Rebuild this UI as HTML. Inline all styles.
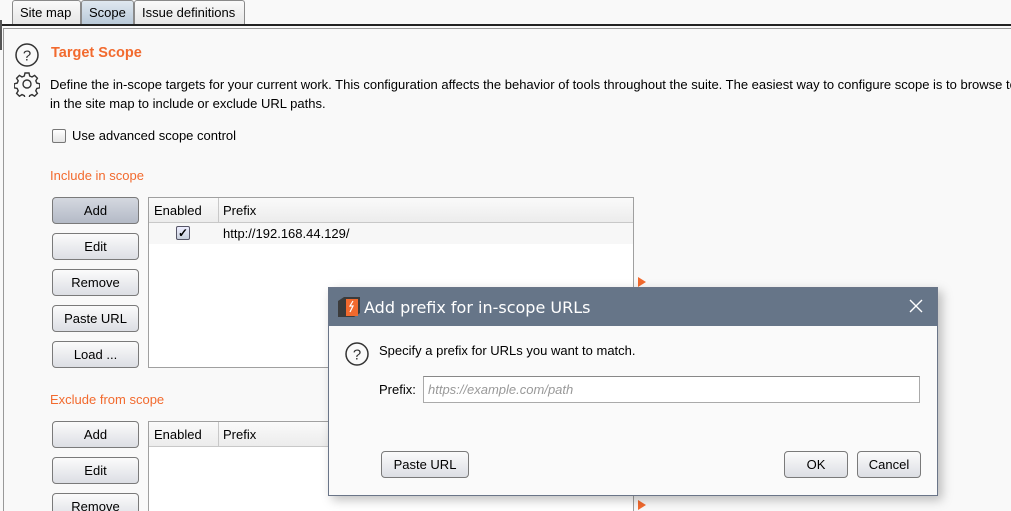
<!DOCTYPE html>
<html style="width:1011px;height:511px;overflow:hidden"><head><style>
*{box-sizing:border-box;margin:0;padding:0}
body{width:1011px;height:511px;overflow:hidden;background:#f9f9f9;font-family:"Liberation Sans",Arial,sans-serif;font-size:13px;color:#000;position:relative}
.abs{position:absolute}
.tab{position:absolute;top:0;height:24px;border:1px solid #8a8a8a;border-bottom:none;border-radius:3px 3px 0 0;background:linear-gradient(#fafafa,#e6e6e6);padding:4px 7px;font-size:13px}
.btn{position:absolute;width:87px;height:27px;border:1px solid #7a7a7a;border-radius:4px;background:linear-gradient(#fbfbfb,#dcdee4);text-align:center;line-height:25px;font-size:13px}
.tbl{position:absolute;left:148px;width:486px;border:1px solid #a0a0a0;background:#fff;overflow:hidden}
.th{height:25px;background:linear-gradient(#fafafa,#ececec);border-bottom:1px solid #c8c8c8;position:relative}
.orange{color:#f26a2e}
</style></head><body>
<div class="tab" style="left:12px;width:69px">Site map</div>
<div class="tab" style="left:81px;width:53px;background:linear-gradient(#dfe8f0,#b9c9d8)">Scope</div>
<div class="tab" style="left:134px;width:111px">Issue definitions</div>
<div class="abs" style="left:0;top:24px;width:1011px;height:2px;background:#222"></div>
<div class="abs" style="left:3px;top:28px;width:1008px;height:1px;background:#999"></div>
<div class="abs" style="left:3px;top:28px;width:1px;height:483px;background:#999"></div>
<div class="abs" style="left:0;top:20px;width:2px;height:30px;background:#555"></div>

<svg class="abs" style="left:14px;top:42px" width="26" height="26"><circle cx="13" cy="13" r="11" fill="none" stroke="#333" stroke-width="1.5"/><text x="13" y="18.5" text-anchor="middle" font-family="Liberation Sans" font-size="15" fill="#333">?</text></svg>
<div class="abs orange" style="left:51px;top:45px;font-size:14.5px;font-weight:bold">Target Scope</div>
<svg class="abs" style="left:14px;top:71px" width="26" height="26" viewBox="0 0 26 26"><g fill="none" stroke="#333" stroke-width="1.4"><circle cx="13" cy="13" r="4"/><path d="M11 2h4l.7 3 2.3 1 2.6-1.6 2.8 2.8-1.6 2.6 1 2.3 3 .7v4l-3 .7-1 2.3 1.6 2.6-2.8 2.8-2.6-1.6-2.3 1-.7 3h-4l-.7-3-2.3-1-2.6 1.6-2.8-2.8 1.6-2.6-1-2.3-3-.7v-4l3-.7 1-2.3-1.6-2.6 2.8-2.8 2.6 1.6 2.3-1z"/></g></svg>
<div class="abs" style="left:50px;top:75px;white-space:nowrap;line-height:19px">Define the in-scope targets for your current work. This configuration affects the behavior of tools throughout the suite. The easiest way to configure scope is to browse to<br>in the site map to include or exclude URL paths.</div>
<div class="abs" style="left:52px;top:129px;width:14px;height:14px;border:1px solid #777;border-radius:2px;background:linear-gradient(#fff,#e4e4e4)"></div>
<div class="abs" style="left:72px;top:128px">Use advanced scope control</div>

<div class="abs orange" style="left:50px;top:168px">Include in scope</div>
<div class="btn" style="left:52px;top:197px;background:linear-gradient(#d4d8e0,#b4bac6)">Add</div>
<div class="btn" style="left:52px;top:233px">Edit</div>
<div class="btn" style="left:52px;top:269px">Remove</div>
<div class="btn" style="left:52px;top:305px">Paste URL</div>
<div class="btn" style="left:52px;top:341px">Load ...</div>
<div class="tbl" style="top:197px;height:171px">
<div class="th"><span class="abs" style="left:5px;top:5px">Enabled</span><span class="abs" style="left:69px;top:0;width:1px;height:24px;background:#c8c8c8"></span><span class="abs" style="left:74px;top:5px">Prefix</span></div>
<div style="height:21px;background:#f7f7f7;position:relative"><span class="abs" style="left:27px;top:3px;width:14px;height:14px;border:1px solid #556;border-radius:2px;background:linear-gradient(#eef,#c8d0dc);font-size:12px;line-height:12px;text-align:center;font-weight:bold">✓</span><span class="abs" style="left:74px;top:3px">http://192.168.44.129/</span></div>
</div>
<div class="abs" style="left:638px;top:277px;width:0;height:0;border-left:8px solid #f26a2e;border-top:5px solid transparent;border-bottom:5px solid transparent"></div>
<div class="abs" style="left:638px;top:500px;width:0;height:0;border-left:8px solid #f26a2e;border-top:5px solid transparent;border-bottom:5px solid transparent"></div>

<div class="abs orange" style="left:50px;top:392px">Exclude from scope</div>
<div class="btn" style="left:52px;top:421px">Add</div>
<div class="btn" style="left:52px;top:457px">Edit</div>
<div class="btn" style="left:52px;top:493px">Remove</div>
<div class="tbl" style="top:421px;height:90px;border-bottom:none">
<div class="th"><span class="abs" style="left:5px;top:5px">Enabled</span><span class="abs" style="left:69px;top:0;width:1px;height:24px;background:#c8c8c8"></span><span class="abs" style="left:74px;top:5px">Prefix</span></div>
</div>

<div class="abs" style="left:328px;top:287px;width:610px;height:209px;background:#fafafa;border:1px solid #6a7588;box-shadow:4px 4px 10px rgba(0,0,0,.25)">
<div style="height:38px;background:#667588;position:relative">
<svg class="abs" style="left:9px;top:9px" width="22" height="20"><path d="M0 4L6 0h16v16l-6 4H0z" fill="#3b3b3b"/><rect x="8" y="2" width="12" height="17" fill="#f26a2e"/><path d="M15 4l-3 5h3l-3 6" stroke="#fff" fill="none" stroke-width="1.2"/></svg>
<span class="abs" style="left:35px;top:10px;color:#fff;font-size:16px;font-family:'DejaVu Sans','Liberation Sans',sans-serif">Add prefix for in-scope URLs</span>
<svg class="abs" style="left:580px;top:11px" width="14" height="14"><path d="M1 1L13 13M13 1L1 13" stroke="#fff" stroke-width="1.4"/></svg>
</div>
<svg class="abs" style="left:15px;top:53px" width="26" height="26"><circle cx="13" cy="13" r="11" fill="none" stroke="#333" stroke-width="1.5"/><text x="13" y="18.5" text-anchor="middle" font-family="Liberation Sans" font-size="15" fill="#333">?</text></svg>
<div class="abs" style="left:50px;top:55px">Specify a prefix for URLs you want to match.</div>
<div class="abs" style="left:50px;top:94px">Prefix:</div>
<div class="abs" style="left:94px;top:88px;width:497px;height:27px;border:1px solid #aaa;border-top-color:#888;background:#fff;color:#999;font-style:italic;padding:5px 4px">https://example.com/path</div>
<div class="btn" style="left:52px;top:163px;width:88px">Paste URL</div>
<div class="btn" style="left:455px;top:163px;width:64px">OK</div>
<div class="btn" style="left:528px;top:163px;width:64px">Cancel</div>
</div>
</body></html>
